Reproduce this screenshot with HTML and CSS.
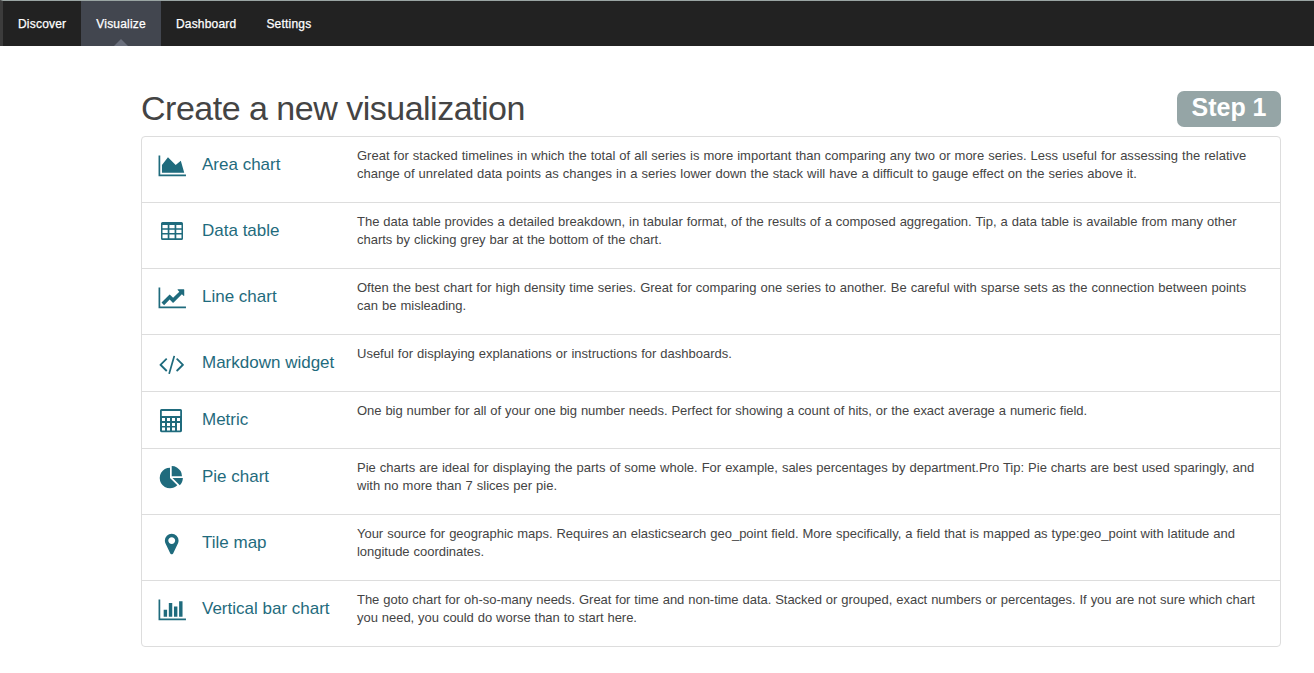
FILE: index.html
```html
<!DOCTYPE html>
<html lang="en">
<head>
<meta charset="utf-8">
<title>Visualize</title>
<link rel="stylesheet" href="styles.css">
</head>
<body>
<nav class="navbar">
  <a class="tab">Discover</a>
  <a class="tab active">Visualize</a>
  <a class="tab">Dashboard</a>
  <a class="tab">Settings</a>
</nav>
<main class="wizard">
  <header class="heading">
    <h1 class="title">Create a new visualization</h1>
    <span class="step">Step 1</span>
  </header>
  <ul class="types">
    <li class="type">
      <svg class="icon" viewBox="-40 10 2048 1792"><path d="M2048 1536v128h-2048v-1536h128v1408h1920zm-384-1024l256 896h-1664v-576l448-576 576 576z"/></svg>
      <span class="name">Area chart</span>
      <p class="desc loose">Great for stacked timelines in which the total of all series is more important than comparing any two or more series. Less useful for assessing the relative<br>change of unrelated data points as changes in a series lower down the stack will have a difficult to gauge effect on the series above it.</p>
    </li>
    <li class="type">
      <svg class="icon" viewBox="0 0 27.43 24"><path fill-rule="evenodd" d="M4.500 2h19q1.500 0 1.500 1.500v15q0 1.500-1.500 1.500h-19q-1.500 0-1.500-1.500v-15q0-1.500 1.500-1.500zM4.500 5h5.200v3.200h-5.200zM11.400 5h5.200v3.200h-5.200zM18.300 5h5.200v3.200h-5.200zM4.500 9.700h5.200v3.300h-5.200zM11.400 9.700h5.200v3.300h-5.200zM18.300 9.700h5.200v3.300h-5.200zM4.500 14.500h5.200v3.700h-5.200zM11.400 14.500h5.200v3.700h-5.200zM18.300 14.500h5.200v3.700h-5.200z"/></svg>
      <span class="name">Data table</span>
      <p class="desc tight">The data table provides a detailed breakdown, in tabular format, of the results of a composed aggregation. Tip, a data table is available from many other<br>charts by clicking grey bar at the bottom of the chart.</p>
    </li>
    <li class="type">
      <svg class="icon" viewBox="-40 10 2048 1792"><path d="M2048 1536v128h-2048v-1536h128v1408h1920zm-128-1248v435q0 21-19.500 29.500t-35.500-7.500l-121-121-633 633q-10 10-23 10t-23-10l-233-233-416 416-192-192 585-585q10-10 23-10t23 10l233 233 464-464-121-121q-16-16-7.500-35.500t29.500-19.500h435q14 0 23 9t9 23z"/></svg>
      <span class="name">Line chart</span>
      <p class="desc">Often the best chart for high density time series. Great for comparing one series to another. Be careful with sparse sets as the connection between points<br>can be misleading.</p>
    </li>
    <li class="type short">
      <svg class="icon" viewBox="0 0 2048 1792"><path d="M681 1399l-50 50q-10 10-23 10t-23-10l-466-466q-10-10-10-23t10-23l466-466q10-10 23-10t23 10l50 50q10 10 10 23t-10 23l-393 393 393 393q10 10 10 23t-10 23zm591-1067l-373 1291q-4 13-15.500 19.500t-23.500 2.500l-62-17q-13-4-19.500-15.500t-2.500-24.500l373-1291q4-13 15.500-19.500t23.500-2.500l62 17q13 4 19.500 15.500t2.500 24.500zm657 651l-466 466q-10 10-23 10t-23-10l-50-50q-10-10-10-23t10-23l393-393-393-393q-10-10-10-23t10-23l50-50q10-10 23-10t23 10l466 466q10 10 10 23t-10 23z"/></svg>
      <span class="name">Markdown widget</span>
      <p class="desc">Useful for displaying explanations or instructions for dashboards.</p>
    </li>
    <li class="type short">
      <svg class="icon" viewBox="0 0 27.43 24"><path fill-rule="evenodd" d="M3.500 0h19q1.500 0 1.500 1.500v20.300q0 1.500-1.500 1.500h-19q-1.500 0-1.500-1.500v-20.300q0-1.500 1.500-1.500zM3.800 2v5h18.400v-5z"/><path class="keys" d="M4 9h3v3h-3zM9 9h3v3h-3zM14 9h3v3h-3zM19 9h3v3h-3zM4 14h3v3h-3zM9 14h3v3h-3zM14 14h3v3h-3zM4 18.500h3v3h-3zM9 18.500h3v3h-3zM14 18.500h3v3h-3zM19 14h3v7.500h-3z"/></svg>
      <span class="name">Metric</span>
      <p class="desc tighter">One big number for all of your one big number needs. Perfect for showing a count of hits, or the exact average a numeric field.</p>
    </li>
    <li class="type">
      <svg class="icon" viewBox="-128 0 2048 1792"><path d="M768 890l546 546q-106 108-247.500 168t-298.500 60q-209 0-385.500-103t-279.500-279.500-103-385.500 103-385.500 279.500-279.500 385.500-103v762zm187 6h773q0 157-60 298.500t-168 247.500zm709-128h-768v-768q209 0 385.500 103t279.500 279.500 103 385.500z"/></svg>
      <span class="name">Pie chart</span>
      <p class="desc">Pie charts are ideal for displaying the parts of some whole. For example, sales percentages by department.Pro Tip: Pie charts are best used sparingly, and<br>with no more than 7 slices per pie.</p>
    </li>
    <li class="type">
      <svg class="icon" viewBox="-128 0 2048 1792"><path d="M1152 640q0-106-75-181t-181-75-181 75-75 181 75 181 181 75 181-75 75-181zm256 0q0 109-33 179l-364 774q-16 33-47.500 52t-67.500 19-67.500-19-46.500-52l-365-774q-33-70-33-179 0-212 150-362t362-150 362 150 150 362z"/></svg>
      <span class="name">Tile map</span>
      <p class="desc tight">Your source for geographic maps. Requires an elasticsearch geo_point field. More specifically, a field that is mapped as type:geo_point with latitude and<br>longitude coordinates.</p>
    </li>
    <li class="type">
      <svg class="icon" viewBox="-40 10 2048 1792"><path d="M640 896v512h-256v-512h256zm384-512v1024h-256v-1024h256zm1024 1152v128h-2048v-1536h128v1408h1920zm-640-896v768h-256v-768h256zm384-384v1152h-256v-1152h256z"/></svg>
      <span class="name">Vertical bar chart</span>
      <p class="desc tighter">The goto chart for oh-so-many needs. Great for time and non-time data. Stacked or grouped, exact numbers or percentages. If you are not sure which chart<br>you need, you could do worse than to start here.</p>
    </li>
  </ul>
</main>
</body>
</html>
```

FILE: styles.css
```css
* { box-sizing: border-box; }
body {
  margin: 0;
  background: #fff;
  color: #444;
  font: 13px/18px "Liberation Sans", Arial, sans-serif;
  overflow: hidden;
}
.navbar {
  display: flex;
  height: 46px;
  background: #222;
  border-top: 1px solid #9aa5a3;
  border-left: 3px solid #3c3c3c;
}
.tab {
  position: relative;
  padding: 1px 15px 0;
  color: #fff;
  font-size: 12px;
  line-height: 45px;
  letter-spacing: 0.2px;
  -webkit-text-stroke: 0.25px #fff;
}
.active { background: #42464f; }
.active::after {
  content: "";
  position: absolute;
  left: 50%;
  bottom: 0;
  margin-left: -7px;
  border: 7px solid transparent;
  border-top: 0;
  border-bottom-color: #6a6f7c;
}
.wizard { padding: 45px 33px 0 141px; }
.heading {
  display: flex;
  justify-content: space-between;
  height: 45px;
}
.title {
  margin: 0;
  font-size: 34px;
  font-weight: 400;
  line-height: 34px;
  letter-spacing: -0.5px;
}
.step {
  width: 104px;
  height: 36px;
  border-radius: 7px;
  background: #95a5a6;
  color: #fff;
  font-size: 25px;
  font-weight: 700;
  line-height: 33px;
  text-align: center;
}
.types {
  margin: 0;
  padding: 0;
  list-style: none;
  border: 1px solid #ddd;
  border-radius: 4px;
}
.type {
  display: grid;
  grid-template-columns: 44px 155px 1fr;
  align-items: start;
  height: 66px;
  padding: 10px 16px 0;
  border-bottom: 1px solid #ddd;
}
.type:last-child { border-bottom: 0; height: 65px; }
.type.short { height: 57px; }
.icon {
  width: 27.430px;
  height: 24px;
  margin-top: 7px;
  fill: #1f6b7d;
  overflow: visible;
}
.keys { fill: #fff; }
.name {
  color: #1f6b7d;
  font-size: 17px;
  line-height: 24px;
  margin-top: 6px;
  white-space: nowrap;
}
.desc {
  margin: 0;
  white-space: nowrap;
  word-spacing: 0.39px;
}
.loose { letter-spacing: 0.012px; }
.tight { letter-spacing: -0.021px; }
.tighter { letter-spacing: -0.038px; }
```
